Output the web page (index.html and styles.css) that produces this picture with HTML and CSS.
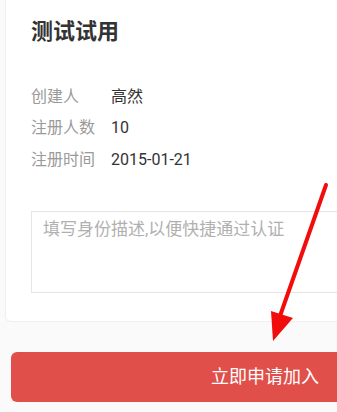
FILE: index.html
```html
<!DOCTYPE html>
<html lang="zh-CN">
<head>
<meta charset="utf-8">
<link rel="stylesheet" href="styles.css">
</head>
<body>
<div class="page">
  <div class="card">
    <h1 class="title">测试试用</h1>
    <div class="info">
      <div class="row"><span class="label">创建人</span><span class="value">高然</span></div>
      <div class="row"><span class="label">注册人数</span><span class="value">10</span></div>
      <div class="row"><span class="label">注册时间</span><span class="value">2015-01-21</span></div>
    </div>
    <div class="desc"><span class="placeholder">填写身份描述,以便快捷通过认证</span></div>
  </div>
  <div class="btn">立即申请加入</div>
</div>
<svg class="arrow" width="337" height="412" viewBox="0 0 337 412">
  <line x1="326" y1="185" x2="280" y2="316" stroke="#f20d0d" stroke-width="4" stroke-linecap="round"/>
  <polygon points="271,311 293,318 273,341" fill="#f20d0d"/>
</svg>
</body>
</html>
```
FILE: styles.css
```css
html, body {
  margin: 0;
  padding: 0;
  width: 337px;
  height: 412px;
  overflow: hidden;
  background: #fafafa;
  font-family: "Roboto", "Noto Sans CJK SC", sans-serif;
}
.page {
  width: 540px;
  padding-left: 5px;
}
.card {
  width: 520px;
  background: #fff;
  border: 1px solid #efefef;
  border-top: none;
  border-radius: 0 0 6px 6px;
  padding: 17px 0 28px 25px;
  box-sizing: border-box;
}
.title {
  margin: 0;
  font-size: 22px;
  line-height: 30px;
  font-weight: bold;
  color: #333;
}
.info {
  margin-top: 33.5px;
}
.row {
  display: flex;
  height: 31.5px;
  line-height: 31.5px;
  font-size: 16px;
}
.label {
  width: 80px;
  color: #9a9a9a;
}
.value {
  color: #333;
}
.desc {
  margin-top: 36px;
  height: 82px;
  box-sizing: border-box;
  border: 1px solid #e6e6e6;
  padding: 5px 11px;
  font-size: 17px;
  line-height: 24px;
}
.placeholder {
  color: #b0b0b0;
}
.btn {
  margin: 30px 0 0 6px;
  width: 508px;
  height: 50px;
  border-radius: 6px;
  background: #e04f4a;
  color: #fff;
  font-size: 18px;
  line-height: 50px;
  text-align: center;
}
.arrow {
  position: absolute;
  left: 0;
  top: 0;
}
```
